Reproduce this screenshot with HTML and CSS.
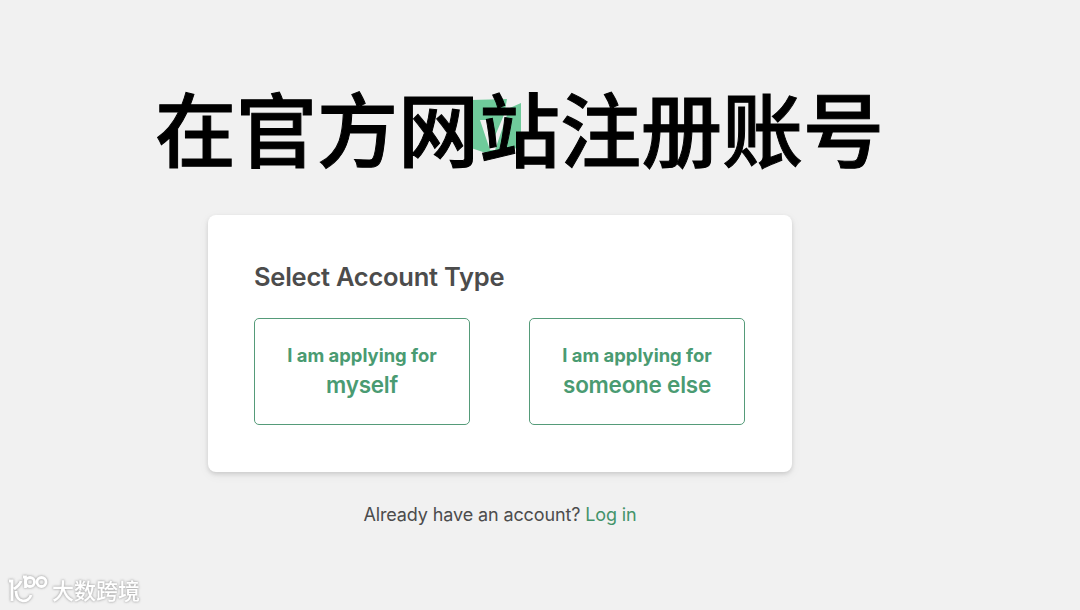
FILE: index.html
```html
<!DOCTYPE html>
<html lang="zh-CN">
<head>
<meta charset="utf-8">
<title>Select Account Type</title>
<link rel="stylesheet" href="styles.css">
</head>
<body>
<main class="page">
  <header class="hero">
    <svg class="brand" viewBox="0 0 50 58" aria-hidden="true">
      <path class="brand-shape" d="M0 2 36 1 34 12 50 5V51L41 50 30 53 15 55 0 50Z"/>
      <path class="brand-mark" d="M9 22h9l6 16 11-26 3-1L24 52h-5Z"/>
    </svg>
    <h1 class="headline">在官方网站注册账号</h1>
  </header>
  <section class="card">
    <h2 class="card-title">Select Account Type</h2>
    <div class="choices">
      <button class="choice"><span class="choice-lead">I am applying for</span><span class="choice-who">myself</span></button>
      <button class="choice"><span class="choice-lead">I am applying for</span><span class="choice-who">someone else</span></button>
    </div>
  </section>
  <p class="login">Already have an account? <a class="login-link" href="#">Log in</a></p>
</main>
<div class="watermark">
  <svg class="watermark-logo" viewBox="0 0 40 32" aria-hidden="true">
    <path d="M1 8h3V28M13 8C12 12 9 14 6 16M8 18C8 31 21 30 23 22M15 4h2.500V15"/>
    <circle cx="22" cy="9" r="4.500"/><circle cx="33.500" cy="9" r="4.500"/>
  </svg>
  <span class="watermark-text">大数跨境</span>
</div>
</body>
</html>
```
FILE: styles.css
```css
body {
  margin: 0;
  height: 610px;
  overflow: hidden;
  background: #f1f1f1;
  color: #4c4c4c;
  font-family: Inter, "Noto Sans CJK SC", sans-serif;
}
.page {
  display: flex;
  flex-direction: column;
  align-items: center;
  width: 1000px;
  padding-top: 67px;
}
.hero {
  position: relative;
  align-self: flex-start;
  margin-left: 155px;
  height: 148px;
}
.brand {
  position: absolute;
  left: 316px;
  top: 31px;
  width: 50px;
  height: 58px;
}
.brand-shape { fill: #6fcb9b; }
.brand-mark { fill: #f1f1f1; }
.headline {
  position: relative;
  margin: 0;
  color: #000;
  font: 500 81px/117px "Noto Sans CJK SC", sans-serif;
  -webkit-text-stroke: 1px #000;
  white-space: nowrap;
}
.card {
  box-sizing: border-box;
  width: 584px;
  height: 257px;
  padding: 46px 47px 46px 46px;
  border-radius: 8px;
  background: #fff;
  box-shadow: 0 2px 4px rgba(0, 0, 0, .13), 0 3px 12px rgba(0, 0, 0, .05);
}
.card-title {
  margin: 0 0 25px;
  font-size: 25.5px;
  line-height: 32px;
  font-weight: 600;
  letter-spacing: -.25px;
  white-space: nowrap;
}
.choices {
  display: flex;
  justify-content: space-between;
}
.choice {
  display: flex;
  flex-direction: column;
  align-items: center;
  box-sizing: border-box;
  width: 216px;
  height: 107px;
  padding: 22px 0 0;
  border: 1px solid #559b79;
  border-radius: 5px;
  background: #fff;
  color: #4a9b72;
  font-family: inherit;
  font-weight: 600;
  white-space: nowrap;
}
.choice-lead {
  font-size: 18.4px;
  font-weight: 700;
  line-height: 29px;
}
.choice-who {
  font-size: 22.5px;
  line-height: 30px;
  letter-spacing: -.25px;
}
.login {
  margin: 31px 0 0;
  font-size: 18px;
  line-height: 24px;
  letter-spacing: -.12px;
  white-space: nowrap;
}
.login-link {
  color: #43936a;
  text-decoration: none;
}
.watermark {
  position: absolute;
  left: 8px;
  top: 573px;
  display: flex;
  align-items: center;
  gap: 4px;
  color: #fff;
  filter: drop-shadow(0 0 1px #aaa) drop-shadow(0 0 1px #ccc);
}
.watermark-logo {
  width: 40px;
  height: 32px;
  fill: none;
  stroke: #fff;
  stroke-width: 2.8;
}
.watermark-text {
  font: 500 22px/32px "Noto Sans CJK SC", sans-serif;
}
```
